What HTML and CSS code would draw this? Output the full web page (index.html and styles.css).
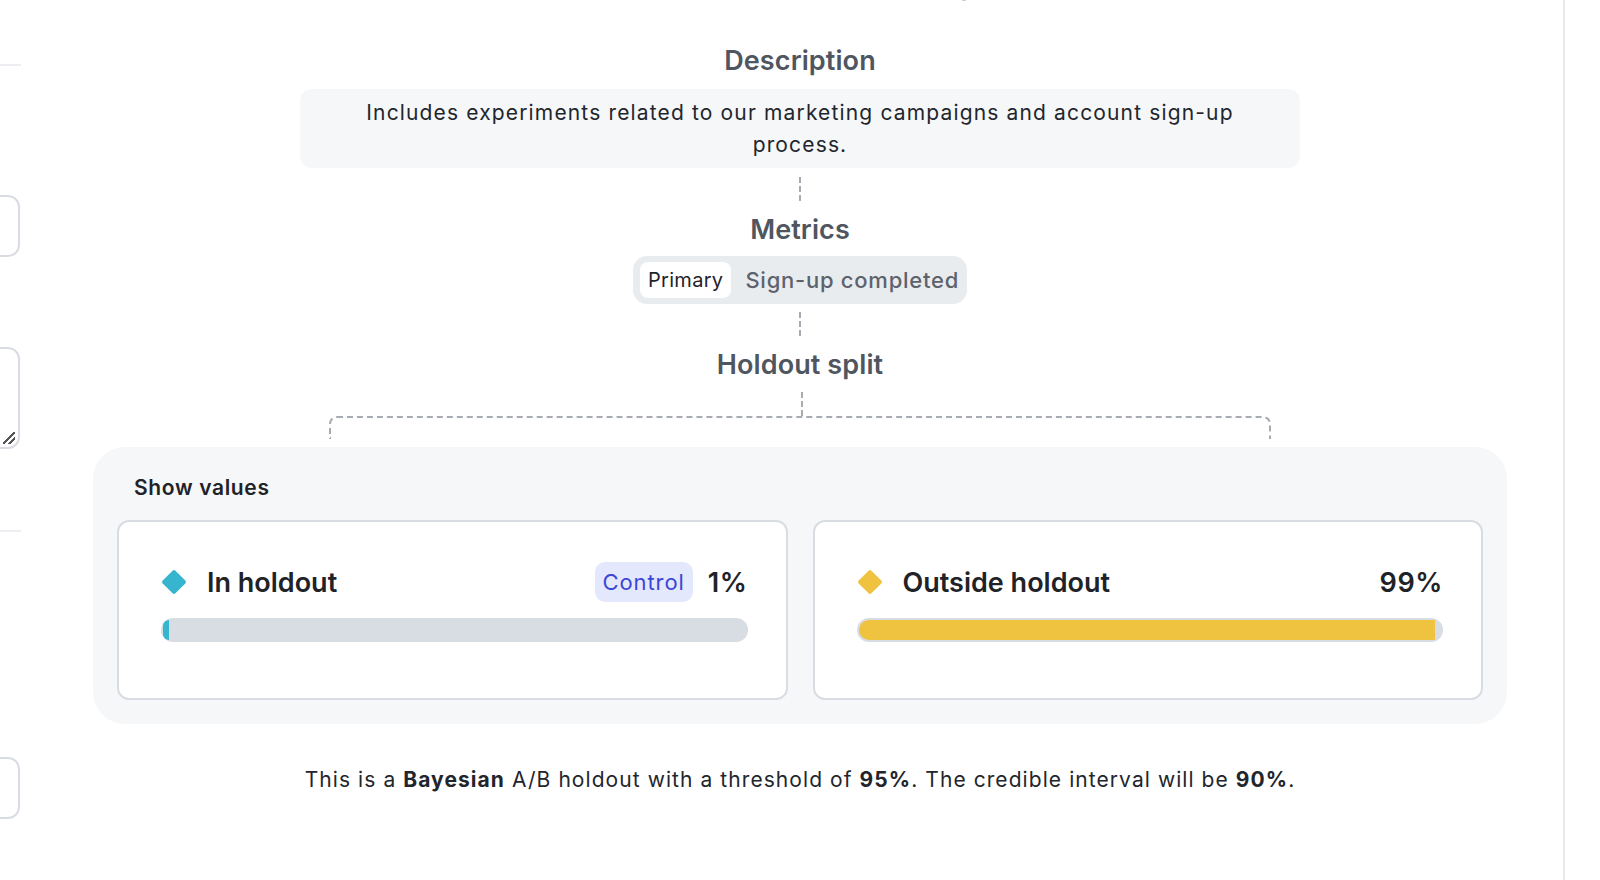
FILE: index.html
```html
<!DOCTYPE html>
<html lang="en">
<head>
<meta charset="utf-8">
<title>Holdout summary</title>
<link rel="stylesheet" href="styles.css">
</head>
<body>
<div class="app">
  <aside class="sidebar">
    <div class="sidebar-inner">
      <div class="rule rule-top"></div>
      <div class="field field-input"></div>
      <div class="field field-textarea"><span class="caret">.</span><span class="grip"></span></div>
      <div class="rule rule-mid"></div>
      <div class="field field-input field-last"></div>
    </div>
  </aside>
  <main class="main">
    <div class="content">
      <h2 class="heading heading-cut">Holdout setup</h2>
      <h3 class="heading heading-desc">Description</h3>
      <div class="desc-box">Includes experiments related to our marketing campaigns and account sign-up process.</div>
      <div class="connector"></div>
      <h3 class="heading heading-metrics">Metrics</h3>
      <div class="metric-pill"><span class="metric-tag">Primary</span><span class="metric-name">Sign-up completed</span></div>
      <div class="connector connector-b"></div>
      <h3 class="heading">Holdout split</h3>
      <div class="connector connector-c"></div>
      <div class="bracket"></div>
      <section class="panel">
        <div class="panel-title">Show values</div>
        <div class="cards">
          <div class="card">
            <div class="card-head">
              <span class="diamond diamond-teal"></span>
              <span class="card-name">In holdout</span>
              <span class="badge">Control</span>
              <span class="pct">1%</span>
            </div>
            <div class="track"><div class="fill fill-teal" style="width:1%"></div></div>
          </div>
          <div class="card">
            <div class="card-head">
              <span class="diamond diamond-yellow"></span>
              <span class="card-name">Outside holdout</span>
              <span class="pct">99%</span>
            </div>
            <div class="track"><div class="fill fill-yellow" style="width:99%"></div></div>
          </div>
        </div>
      </section>
      <p class="summary">This is a <b>Bayesian</b> A/B holdout with a threshold of <b>95%</b>. The credible interval will be <b>90%</b>.</p>
    </div>
  </main>
  <div class="rightpane"></div>
</div>
</body>
</html>
```

FILE: styles.css
```css
* { box-sizing: border-box; }
html, body { margin: 0; padding: 0; background: #ffffff; }
body {
  font-family: Inter, "Noto Sans", "Liberation Sans", sans-serif;
  color: #1f2328;
  width: 1600px;
  height: 880px;
  overflow: hidden;
}
.app { display: flex; height: 880px; overflow: hidden; }

/* left clipped form column */
.sidebar { width: 21px; flex: none; overflow: hidden; }
.sidebar-inner {
  width: 300px;
  margin-left: -279px;
  display: flex;
  flex-direction: column;
}
.rule { height: 2px; background: #eceef1; width: 300px; }
.rule-top { margin-top: 64px; }
.field {
  border: 2px solid #d9dde3;
  border-radius: 12px;
  width: 299px;
  background: #fff;
  position: relative;
}
.field-input { height: 62px; margin-top: 129px; }
.field-textarea { height: 102px; margin-top: 90px; }
.caret { position: absolute; left: 270px; top: 18px; font-size: 18px; color: #1f2a5a; }
.grip {
  position: absolute; right: 3px; bottom: 3px; width: 12px; height: 12px;
  background: linear-gradient(135deg, transparent 45%, #555 45%, #555 55%, transparent 55%, transparent 70%, #555 70%, #555 80%, transparent 80%);
}
.rule-mid { margin-top: 81px; }
.field-last { margin-top: 225px; }

/* main column */
.main {
  flex: none;
  width: 1544px;
  border-right: 2px solid #e8eaee;
  padding: 0 56px 0 72px;
}
.rightpane { flex: 1; background: #fff; }
.content {
  display: flex;
  flex-direction: column;
  align-items: center;
  margin-top: -30px;
}
.heading {
  margin: 0;
  font-size: 27px;
  line-height: 32px;
  font-weight: 600;
  color: #50565f;
  letter-spacing: 0.1px;
}
.heading-cut { color: #1f2328; margin-left: 170px; }
.heading-desc { margin-top: 43px; }
.desc-box {
  margin-top: 12px;
  width: 1000px;
  background: #f6f7f9;
  border-radius: 12px;
  padding: 8px 50px 7px;
  text-align: center;
  font-size: 21px;
  line-height: 32px;
  letter-spacing: 1.15px;
  color: #22262c;
}
.connector {
  width: 0;
  height: 24px;
  border-left: 2px dashed #a7abb2;
  margin: 9px 0 12px;
}
.heading-metrics { margin-top: 1px; }
.connector-b { margin: 8px 0 13px; }
.connector-c { margin: 11px 0 0 4px; height: 24px; }

.metric-pill {
  margin-top: 10px;
  display: flex;
  align-items: center;
  gap: 14px;
  background: #e9ecef;
  border-radius: 14px;
  padding: 6px 8px 6px 7px;
  height: 48px;
}
.metric-tag {
  background: #fff;
  border-radius: 8px;
  height: 36px;
  line-height: 36px;
  padding: 0 8px;
  font-size: 20px;
  letter-spacing: 0.3px;
  color: #1f2328;
}
.metric-name {
  font-size: 22px;
  letter-spacing: 0.75px;
  color: #5d636c;
  font-weight: 500;
}

.bracket {
  width: 942px;
  height: 23px;
  border: 2px dashed #a7abb2;
  border-bottom: none;
  border-radius: 8px 8px 0 0;
  margin-bottom: 8px;
}

.panel {
  width: 1414px;
  background: #f6f7f9;
  border-radius: 32px;
  padding: 26px 24px 24px;
}
.panel-title {
  font-size: 21px;
  line-height: 30px;
  font-weight: 600;
  letter-spacing: 0.65px;
  color: #1f2328;
  padding-left: 17px;
  margin-bottom: 17px;
}
.cards { display: flex; gap: 25px; }
.card {
  flex: 1;
  background: #fff;
  border: 2px solid #d9dde3;
  border-radius: 12px;
  padding: 40px 38px 56px 42px;
}
.card-head {
  display: flex;
  align-items: center;
  height: 40px;
}
.diamond {
  width: 18px;
  height: 18px;
  border-radius: 2px;
  transform: rotate(45deg);
  margin: 0 24px 0 4px;
  flex: none;
}
.diamond-teal { background: #37b5cf; }
.diamond-yellow { background: #efc33f; }
.card-name {
  font-size: 27px;
  font-weight: 600;
  color: #1f2328;
  flex: 1;
}
.badge {
  background: #e4e8fd;
  color: #3c46d6;
  font-size: 22px;
  height: 40px;
  line-height: 40px;
  padding: 0 8px;
  border-radius: 10px;
  letter-spacing: 0.9px;
  margin-right: 15px;
}
.pct {
  font-size: 27px;
  font-weight: 600;
  color: #1f2328;
  letter-spacing: 0.6px;
}
.track {
  margin-top: 16px;
  height: 24px;
  background: #d8dce3;
  border-radius: 12px;
  padding: 2px;
  display: flex;
}
.fill { height: 100%; border-radius: 10px 0 0 10px; }
.fill-teal { background: #37b5cf; min-width: 6px; }
.fill-yellow { background: #efc33f; }

.summary {
  margin: 40px 0 0;
  font-size: 21px;
  line-height: 32px;
  letter-spacing: 1.07px;
  color: #22262c;
}
.summary b { font-weight: 700; }
```
